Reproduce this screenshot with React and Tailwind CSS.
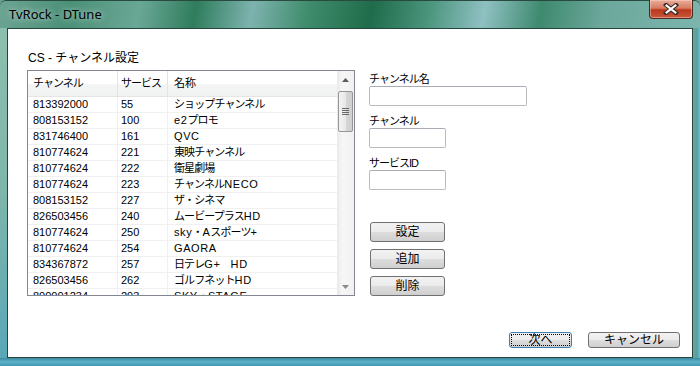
import React from "react";

const rows = [
  ["813392000", "55", "ショップチャンネル"],
  ["808153152", "100", "e2プロモ"],
  ["831746400", "161", "QVC"],
  ["810774624", "221", "東映チャンネル"],
  ["810774624", "222", "衛星劇場"],
  ["810774624", "223", "チャンネルNECO"],
  ["808153152", "227", "ザ・シネマ"],
  ["826503456", "240", "ムービープラスHD"],
  ["810774624", "250", "sky・Aスポーツ+"],
  ["810774624", "254", "GAORA"],
  ["834367872", "257", "日テレG+　HD"],
  ["826503456", "262", "ゴルフネットHD"],
  ["800001234", "293", "SKY・STAGE"],
];

function Mixed({ text }) {
  const parts = text.match(/[\u3000-\u9fff\uff00-\uffef]+|[^\u3000-\u9fff\uff00-\uffef]+/g) || [];
  return parts.map((p, i) =>
    /[\u3000-\u9fff\uff00-\uffef]/.test(p) ? (
      <span key={i} className="tracking-[-0.9px]">{p}</span>
    ) : (
      <span key={i} className="tracking-[0.6px]">{p}</span>
    )
  );
}

function Btn({ children, w = "w-[75px]", h = "h-[20px]", focus = false }) {
  return (
    <div
      className={`${w} ${h} rounded-[3px] border ${
        focus ? "border-[#3c7fb1]" : "border-[#707070]"
      } bg-[linear-gradient(180deg,#f2f2f2_0%,#ebebeb_48%,#dddddd_52%,#cfcfcf_100%)] flex items-center justify-center p-[1px]`}
    >
      <div
        className={`w-full h-full flex items-center justify-center text-[12px] leading-none text-black ${
          focus ? "border border-dotted border-[#000]" : ""
        }`}
      >
        {children}
      </div>
    </div>
  );
}

function Input({ w }) {
  return (
    <div className={`${w} h-[20px] rounded-[2px] border border-[#b9bcc1] border-t-[#a9acb2] bg-white`} />
  );
}

export default function App() {
  return (
    <div className="w-[700px] h-[366px] flex flex-col overflow-hidden bg-[linear-gradient(180deg,#6aa290_0%,#5c9e92_60%,#4c9fb4_100%)] font-['Liberation_Sans','Noto_Sans_CJK_JP',sans-serif] select-none">
      {/* title bar */}
      <div className="h-[28px] flex items-start justify-between bg-[linear-gradient(100deg,#6da494_0%,#4a9077_10%,#6aa796_20%,#2f7d5d_28%,#7db3ae_36%,#3f8c6c_44%,#1f6c4b_53%,#4a947c_61%,#8fc0c2_69%,#3e8a6e_77%,#6da89c_86%,#7bb5ad_100%)] rounded-t-[6px] border-t border-[#2a4a40]">
        <div className="pl-[9px] pt-[5px] text-[13px] leading-[16px] text-black [text-shadow:0_0_6px_rgba(255,255,255,0.8)] font-['Noto_Sans','Liberation_Sans',sans-serif]">
          TvRock - DTune
        </div>
        <div className="mr-[7px] mt-[-1px] w-[44px] h-[19px] rounded-b-[4px] border border-t-0 border-[#4c2a22] bg-[linear-gradient(180deg,#e9ad9a_0%,#d77c62_45%,#b8381c_55%,#c9583a_100%)] flex items-center justify-center shadow-[inset_0_0_0_1px_rgba(255,220,210,0.45)]">
          <svg width="16" height="12" viewBox="0 0 16 12">
            <path d="M3 2 L13 10 M13 2 L3 10" stroke="#3a2a26" strokeWidth="4.2" strokeLinecap="square" />
            <path d="M3.6 2.5 L12.4 9.5 M12.4 2.5 L3.6 9.5" stroke="#ffffff" strokeWidth="2.2" strokeLinecap="square" />
          </svg>
        </div>
      </div>

      {/* middle */}
      <div className="flex flex-1">
        <div className="w-[7px] bg-[linear-gradient(180deg,#8cbfae_0%,#7db6aa_50%,#5aa7b9_100%)]" />
        <div className="w-[686px] h-[330px] border border-[#27443e] bg-white flex flex-col">
          <div className="mt-[22px] ml-[20px] h-[14px] leading-[14px] text-[12px] text-black">
            CS - チャンネル設定
          </div>
          <div className="flex mt-[5px] ml-[19px]">
            {/* list view */}
            <div className="w-[328px] h-[226px] border border-[#828790] flex overflow-hidden">
              <div className="flex-1 flex flex-col overflow-hidden">
                <div className="h-[26px] flex text-[11px] text-black bg-[linear-gradient(180deg,#ffffff_0%,#ffffff_50%,#f4f4f4_55%,#f1f2f2_100%)] border-b border-[#e5e5e5] shrink-0">
                  <div className="w-[90px] pl-[5px] flex items-center border-r border-[#e3e3e3] tracking-[-1px]">チャンネル</div>
                  <div className="w-[50px] pl-[3px] flex items-center border-r border-[#e3e3e3] tracking-[-1px] whitespace-nowrap">サービス</div>
                  <div className="flex-1 pl-[6px] flex items-center">名称</div>
                </div>
                {rows.map((r, i) => (
                  <div key={i} className="h-[16px] flex text-[11px] leading-[15px] text-black shrink-0">
                    <div className="w-[90px] pl-[5px] border-r border-b border-[#f0f0f0] whitespace-nowrap">{r[0]}</div>
                    <div className="w-[50px] pl-[3px] border-r border-b border-[#f0f0f0] whitespace-nowrap">{r[1]}</div>
                    <div className="flex-1 pl-[6px] border-b border-[#f0f0f0] whitespace-nowrap"><Mixed text={r[2]} /></div>
                  </div>
                ))}
              </div>
              {/* scrollbar */}
              <div className="w-[17px] h-full flex flex-col bg-[linear-gradient(90deg,#e9e9e9_0%,#f6f6f6_30%,#f1f1f1_100%)] shrink-0">
                <div className="h-[17px] flex items-center justify-center">
                  <svg width="7" height="4" viewBox="0 0 7 4"><path d="M0 4 L3.5 0 L7 4 Z" fill="#5c5c5c" /></svg>
                </div>
                <div className="mx-[1px] mt-[3px] h-[41px] rounded-[2px] border border-[#959595] bg-[linear-gradient(90deg,#f3f3f3_0%,#e8e8e8_50%,#d6d6d6_51%,#cfcfcf_100%)] flex flex-col items-center justify-center gap-[1px]">
                  <div className="w-[7px] h-[1px] bg-[#6a6a6a]" />
                  <div className="w-[7px] h-[1px] bg-[#6a6a6a]" />
                  <div className="w-[7px] h-[1px] bg-[#6a6a6a]" />
                  <div className="w-[7px] h-[1px] bg-[#6a6a6a]" />
                </div>
                <div className="flex-1" />
                <div className="h-[17px] flex items-center justify-center">
                  <svg width="7" height="4" viewBox="0 0 7 4"><path d="M0 0 L3.5 4 L7 0 Z" fill="#8a8a8a" /></svg>
                </div>
              </div>
            </div>

            {/* right column */}
            <div className="ml-[14px] flex flex-col text-[11px] text-black">
              <div className="mt-[2px] h-[14px] leading-[14px] tracking-[-1px]">チャンネル名</div>
              <Input w="w-[158px]" />
              <div className="mt-[8px] h-[14px] leading-[14px] tracking-[-1px]">チャンネル</div>
              <Input w="w-[77px]" />
              <div className="mt-[8px] h-[14px] leading-[14px] tracking-[-1px]">サービスID</div>
              <Input w="w-[77px]" />
              <div className="ml-[1px] mt-[32px] flex flex-col gap-[7px]">
                <Btn>設定</Btn>
                <Btn>追加</Btn>
                <Btn>削除</Btn>
              </div>
            </div>
          </div>
          <div className="flex-1" />
          <div className="flex justify-end gap-[16px] mr-[12px] mb-[9px]">
            <Btn w="w-[63px]" h="h-[16px]" focus>次へ</Btn>
            <Btn w="w-[92px]" h="h-[16px]">キャンセル</Btn>
          </div>
        </div>
        <div className="w-[7px] bg-[linear-gradient(90deg,#6aa59c_0%,#5b9f9a_60%,#69c0de_100%)]" />
      </div>
      {/* bottom frame */}
      <div className="h-[8px] bg-[linear-gradient(180deg,#3a8aa0_0%,#5fb3cc_50%,#3f95b0_100%)]" />
    </div>
  );
}
